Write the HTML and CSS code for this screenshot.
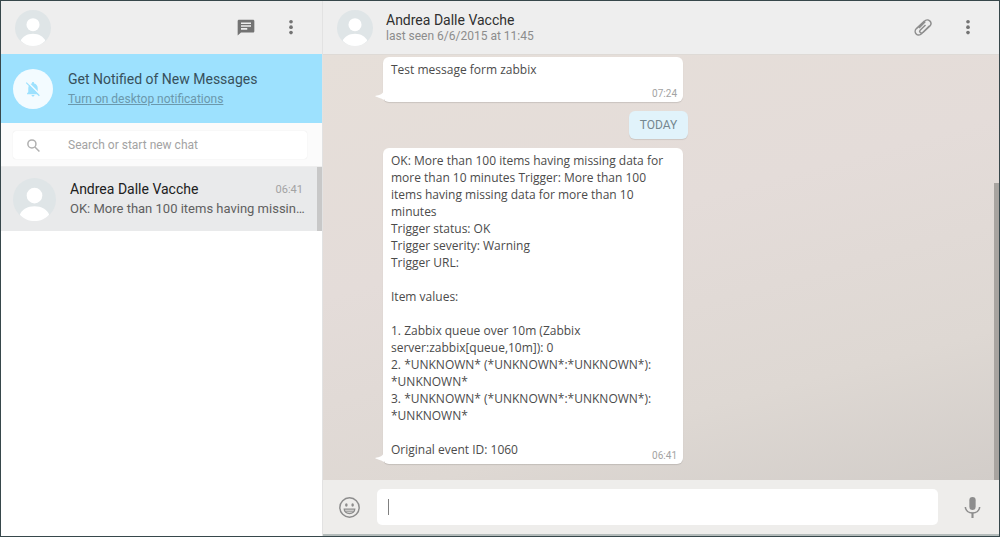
FILE: index.html
```html
<!DOCTYPE html>
<html lang="en">
<head>
  <meta charset="UTF-8" />
  <meta name="viewport" content="width=device-width, initial-scale=1.0" />
  <title>Chat - Andrea Dalle Vacche</title>
  <link rel="stylesheet" href="styles.css">
</head>
<body>
  <!-- shared drawings -->
  <svg class="defs" aria-hidden="true">
    <symbol id="avatar" viewBox="0 0 44 44">
      <circle cx="22" cy="22" r="22" fill="#dfe5e7"/>
      <circle cx="22" cy="18" r="8" fill="#fff"/>
      <path d="M7 37.500C9 32.500 15 29 22 29s13 3.500 15 8.500C33 41.500 28 44 22 44S11 41.500 7 37.500z" fill="#fff"/>
    </symbol>
    <symbol id="dots" viewBox="0 0 24 24">
      <circle cx="12" cy="4.500" r="2.200"/>
      <circle cx="12" cy="11" r="2.200"/>
      <circle cx="12" cy="17.500" r="2.200"/>
    </symbol>
    <symbol id="tail" viewBox="0 0 9 10">
      <path d="M9 0C8 4 5 5 0 6c3 2 5 1.500 9 4z" fill="#fff"/>
    </symbol>
  </svg>

  <div class="app">
    <aside class="sidebar">
      <header class="bar">
        <svg class="avatar"><use href="#avatar"/></svg>
        <div class="actions">
          <button type="button" aria-label="New chat">
            <svg class="icon" viewBox="0 0 24 24"><path d="M20.500 2H3.500C2.700 2 2 2.700 2 3.500V21l4-3.500h14.500c.8 0 1.500-.7 1.500-1.500V3.500C22 2.700 21.300 2 20.500 2zM13.500 14H6v-2h7.500v2zm4.500-3.500H6V8.700h12v1.800zm0-3.300H6V5.300h12v1.900z"/></svg>
          </button>
          <button type="button" aria-label="Menu">
            <svg class="icon"><use href="#dots"/></svg>
          </button>
        </div>
      </header>

      <div class="notice">
        <span class="bell">
          <svg viewBox="0 0 24 24">
            <path d="M12 2.500c-.9 0-1.500.7-1.500 1.500v.7C7.500 5.400 5.700 7.800 5.700 11v5L4 18v1h16v-1l-1.700-2v-5c0-3.200-1.800-5.600-4.800-6.300V4c0-.8-.6-1.500-1.500-1.500zM10 20c0 1.200.9 2 2 2s2-.8 2-2z" fill="#9de1fe"/>
            <path d="M4.500 2.500l17 17" stroke="#f3fbff" stroke-width="2"/>
            <path d="M3 3.500l17.500 17.500" stroke="#9de1fe" stroke-width="1.600"/>
          </svg>
        </span>
        <div>
          <div class="notice-title">Get Notified of New Messages</div>
          <a href="#">Turn on desktop notifications</a>
        </div>
      </div>

      <div class="search">
        <label class="search-box">
          <svg viewBox="0 0 16 16" fill="none" stroke="#b0b0b0" stroke-width="1.600"><circle cx="6.300" cy="6.300" r="4.300"/><path d="M9.500 9.500l4.800 4.800"/></svg>
          <input type="text" placeholder="Search or start new chat" aria-label="Search or start new chat">
        </label>
      </div>

      <div class="chat-list">
        <div class="chat">
          <svg class="avatar-large"><use href="#avatar"/></svg>
          <div class="chat-body">
            <div class="chat-top">
              <span class="chat-name">Andrea Dalle Vacche</span>
              <span class="chat-time">06:41</span>
            </div>
            <div class="chat-last">OK: More than 100 items having missin…</div>
          </div>
        </div>
        <div class="list-thumb"></div>
      </div>
    </aside>

    <main class="main">
      <header class="bar">
        <svg class="avatar"><use href="#avatar"/></svg>
        <div class="contact">
          <div class="contact-name">Andrea Dalle Vacche</div>
          <div class="contact-seen">last seen 6/6/2015 at 11:45</div>
        </div>
        <div class="actions">
          <button type="button" aria-label="Attach">
            <svg class="icon clip" viewBox="0 0 24 24"><path d="M19.500 9.500l-9.300 9.300c-1.900 1.900-4.700 2-6.400.3s-1.600-4.500.3-6.400L13.700 3.800c1.800-1.800 4.700-2 6.400-.3M20.100 3.500c2.100 1.700 2 4.200.2 6L12 17.200c-1.200 1.200-2.600 1.100-3.400.3s-.8-2.100.2-3.100l6.200-6M14.600 4.500l-7.400 7.400"/></svg>
          </button>
          <button type="button" aria-label="Menu">
            <svg class="icon"><use href="#dots"/></svg>
          </button>
        </div>
      </header>

      <section class="messages">
        <div class="bubble">
          <div class="text">Test message form zabbix</div>
          <div class="last-line">
            <time>07:24</time>
          </div>
          <svg class="tail"><use href="#tail"/></svg>
        </div>

        <div class="day">TODAY</div>

        <div class="bubble">
          <div class="text">OK: More than 100 items having missing data for more than 10 minutes Trigger: More than 100 items having missing data for more than 10 minutes
Trigger status: OK
Trigger severity: Warning
Trigger URL:

Item values:

1. Zabbix queue over 10m (Zabbix server:zabbix[queue,10m]): 0
2. *UNKNOWN* (*UNKNOWN*:*UNKNOWN*): *UNKNOWN*
3. *UNKNOWN* (*UNKNOWN*:*UNKNOWN*): *UNKNOWN*

</div>
          <div class="last-line">
            <span>Original event ID: 1060</span>
            <time>06:41</time>
          </div>
          <svg class="tail"><use href="#tail"/></svg>
        </div>
        <div class="messages-thumb"></div>
      </section>

      <footer class="composer">
        <button type="button" aria-label="Emoji">
          <svg viewBox="0 0 20 20">
            <circle cx="10" cy="10" r="9.200" fill="none" stroke="#8d8d8d" stroke-width="1.400"/>
            <ellipse cx="7" cy="7.700" rx="1.200" ry="1.700" fill="#8d8d8d"/>
            <ellipse cx="13" cy="7.700" rx="1.200" ry="1.700" fill="#8d8d8d"/>
            <path d="M5 11.500h10c0 2.500-2.200 4.200-5 4.200s-5-1.700-5-4.200z" fill="none" stroke="#8d8d8d" stroke-width="1.300"/>
            <path d="M5.500 13.500h9" stroke="#8d8d8d"/>
          </svg>
        </button>
        <input type="text" aria-label="Message">
        <button type="button" aria-label="Record">
          <svg viewBox="0 0 20 20">
            <rect x="7" y="0" width="6" height="12.500" rx="3" fill="#8d8d8d"/>
            <path d="M3.200 9.500c.3 3.600 3.200 5.800 6.800 5.800s6.500-2.200 6.800-5.800" fill="none" stroke="#8d8d8d" stroke-width="1.500"/>
            <path d="M10 15v5" stroke="#8d8d8d" stroke-width="2"/>
          </svg>
        </button>
      </footer>
    </main>
  </div>
</body>
</html>
```
FILE: styles.css
```css
* {
  box-sizing: border-box;
}
body {
  margin: 0;
  font-family: Roboto, sans-serif;
  color: #4b4b4b;
}
button {
  display: flex;
  padding: 0;
  border: none;
  background: none;
  cursor: pointer;
}
.defs {
  position: absolute;
  width: 0;
  height: 0;
}
.app {
  display: flex;
  height: 100vh;
  border: 1px solid #37474b;
  background-color: #ffffff;
}

/* left column */
.sidebar {
  width: 32%;
  min-width: 321px;
  flex: none;
}
.bar {
  display: flex;
  align-items: center;
  height: 53px;
  padding: 0 21px 0 14px;
  background-color: #eeeeee;
}
.avatar {
  width: 36px;
  height: 36px;
  flex: none;
}
.actions {
  display: flex;
  gap: 25px;
  margin-left: auto;
}
.icon {
  width: 20px;
  height: 20px;
  fill: #737373;
}
.clip {
  fill: none;
  stroke: #8d8d8d;
  stroke-width: 1.8;
}
.notice {
  display: flex;
  align-items: center;
  gap: 15px;
  height: 69px;
  padding-left: 12px;
  background-color: #9de1fe;
}
.bell {
  display: flex;
  align-items: center;
  justify-content: center;
  width: 40px;
  height: 40px;
  border-radius: 50%;
  background-color: #f3fbff;
}
.bell svg {
  width: 18px;
  height: 18px;
}
.notice-title {
  font-size: 14px;
  line-height: 20px;
  color: #37505b;
}
.notice a {
  display: block;
  font-size: 12px;
  line-height: 20px;
  color: #6b98ac;
}
.search {
  padding: 8px 15px 7px 12px;
  background-color: #fbfbfb;
  border-bottom: 1px solid #eeeeee;
}
.search-box {
  display: flex;
  align-items: center;
  height: 28px;
  padding-left: 13px;
  gap: 27px;
  border-radius: 3px;
  background-color: #ffffff;
  box-shadow: 0 0 1px #dddddd;
}
.search-box svg {
  width: 15px;
  height: 15px;
}
.search-box input {
  flex: 1;
  min-width: 0;
  padding: 0;
  border: none;
  outline: none;
  font-family: inherit;
  font-size: 12px;
}
.search-box input::placeholder {
  color: #a3a3a3;
}
.chat-list {
  position: relative;
}
.chat {
  display: flex;
  align-items: center;
  gap: 14px;
  height: 64px;
  padding: 0 19px 0 12px;
  background-color: #e9eaeb;
}
.avatar-large {
  width: 43px;
  height: 43px;
  flex: none;
}
.chat-body {
  flex: 1;
  min-width: 0;
}
.chat-top {
  display: flex;
  align-items: center;
  justify-content: space-between;
}
.chat-name {
  font-size: 14px;
  line-height: 20px;
  color: #202020;
}
.chat-time {
  font-size: 11px;
  color: #a3a3a3;
}
.chat-last {
  font-size: 13px;
  line-height: 20px;
  color: #606060;
  white-space: nowrap;
}
.list-thumb {
  position: absolute;
  top: 0;
  right: 0;
  width: 5px;
  height: 100%;
  background-color: #c8c8c8;
}

/* conversation */
.main {
  display: flex;
  flex-direction: column;
  flex: 1;
  min-width: 0;
  border-left: 1px solid #e2e2e2;
}
.contact {
  margin-left: 13px;
  padding-bottom: 2px;
}
.contact-name {
  font-size: 14px;
  line-height: 18px;
  color: #303030;
}
.contact-seen {
  font-size: 12px;
  line-height: 14px;
  color: #8c8c8c;
}
.messages {
  position: relative;
  flex: 1;
  display: flex;
  flex-direction: column;
  justify-content: flex-end;
  gap: 9px;
  padding: 0 65px 16px 60px;
  overflow: hidden;
  border-top: 1px solid #dedad6;
  background: linear-gradient(165deg, #e6dfd9 0%, #e4dcd9 40%, #ded8d3 75%, #d2cdc9 100%);
}
.bubble {
  position: relative;
  display: flex;
  flex-direction: column;
  width: 300px;
  min-height: 45px;
  padding: 4px 6px 2px 8px;
  border-radius: 6px;
  background-color: #ffffff;
  box-shadow: 0 1px 1px rgba(0, 0, 0, 0.12);
  font-family: "Open Sans", sans-serif;
  font-size: 12px;
  line-height: 17px;
}
.text {
  white-space: pre-wrap;
}
.last-line {
  display: flex;
  align-items: flex-end;
  margin-top: auto;
}
.last-line span {
  padding-bottom: 4px;
}
.last-line time {
  margin-left: auto;
  font-family: Roboto, sans-serif;
  font-size: 10px;
  line-height: 12px;
  color: #a3a3a3;
}
.tail {
  position: absolute;
  left: -8px;
  bottom: 2px;
  width: 9px;
  height: 10px;
}
.day {
  align-self: center;
  padding: 0 11px;
  border-radius: 6px;
  font-size: 12px;
  line-height: 28px;
  color: #75878f;
  background-color: #e1f3fb;
  box-shadow: 0 1px 1px rgba(0, 0, 0, 0.1);
}
.messages-thumb {
  position: absolute;
  right: 0;
  bottom: 0;
  width: 5px;
  height: 70%;
  background-color: #a8a4a0;
}
.composer {
  display: flex;
  align-items: center;
  gap: 17px;
  height: 56px;
  padding: 0 16px;
  background-color: #eeedeb;
  border-bottom: 2px solid #b4bcbb;
}
.composer svg {
  width: 21px;
  height: 21px;
}
.composer input {
  flex: 1;
  min-width: 0;
  height: 36px;
  margin-right: 7px;
  padding: 0 11px;
  border: none;
  border-radius: 5px;
  outline: none;
  font-family: inherit;
  font-size: 14px;
  background: linear-gradient(#808080, #808080) 11px center / 1px 16px no-repeat #ffffff;
}
```
